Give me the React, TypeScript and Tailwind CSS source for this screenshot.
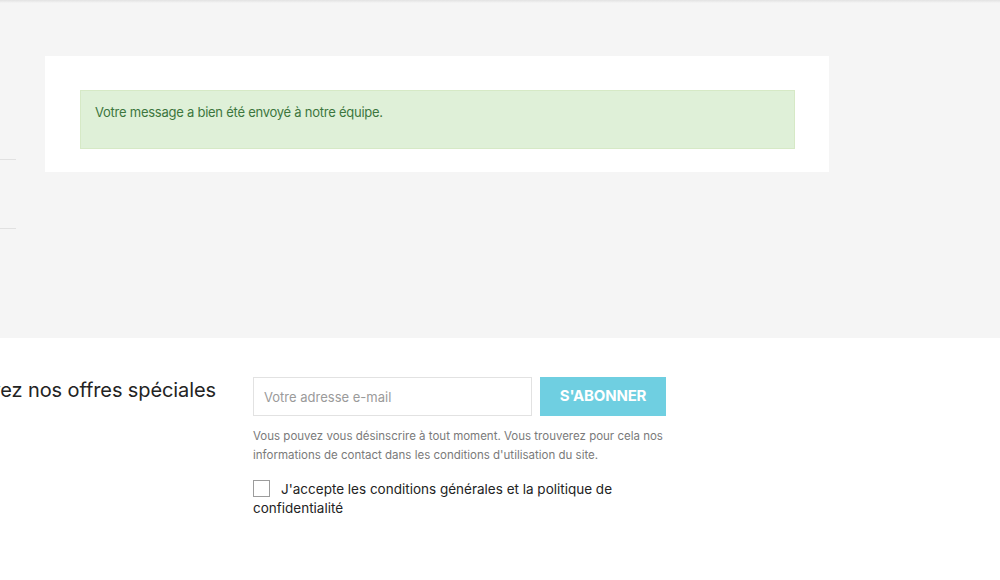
import React from "react";

export default function App() {
  return (
    <div className="w-[1000px] h-[580px] overflow-hidden bg-white" style={{ fontFamily: "Inter, 'Noto Sans', sans-serif" }}>
      <div className="relative h-[338px] bg-[#f5f5f5]">
        <div className="absolute left-0 right-0 top-0 h-[3px] bg-gradient-to-b from-[#e2e2e2] to-[#f5f5f5]" />
        <div className="flex pt-[56px]">
          <div className="w-[16px] shrink-0">
            <div className="mt-[103px] h-px bg-[#e1e1e1]" />
            <div className="mt-[68px] h-px bg-[#e1e1e1]" />
          </div>
          <div className="ml-[29px] w-[784px] h-[116px] bg-white pt-[34px] pl-[35px]">
            <div className="w-[715px] h-[59px] bg-[#dff0d8] border border-[#d6e9c6] pl-[14px] pt-[12px] text-[13px] tracking-[-0.25px] text-[#3c763d]">
              Votre message a bien été envoyé à notre équipe.
            </div>
          </div>
        </div>
      </div>
      <div className="flex pt-[39px]">
        <div className="w-[216px] shrink-0 flex justify-end">
          <h2 className="whitespace-nowrap text-[20px] leading-[26px] text-[#232323] tracking-[-0.1px]">
            Recevez nos offres spéciales
          </h2>
        </div>
        <div className="ml-[37px] w-[420px]">
          <div className="flex gap-[8px]">
            <input
              type="text"
              placeholder="Votre adresse e-mail"
              className="w-[279px] h-[39px] border border-[#e2e2e2] px-[10px] text-[13px] text-[#232323] placeholder:text-[#9a9a9a] outline-none"
            />
            <button className="w-[126px] h-[39px] bg-[#6fcfe1] text-white font-bold text-[15px] tracking-[-0.2px]">
              S'ABONNER
            </button>
          </div>
          <p className="mt-[11px] w-[416px] text-[11.5px] leading-[19px] text-[#7a7a7a]">
            Vous pouvez vous désinscrire à tout moment. Vous trouverez pour cela nos informations de contact dans les conditions d'utilisation du site.
          </p>
          <div className="mt-[15px] w-[414px] text-[13.5px] leading-[19px] text-[#232323]">
            <span className="inline-block w-[17px] h-[17px] border border-[#9c9c9c] align-[-3px] mr-[11px] bg-white" />
            J'accepte les conditions générales et la politique de confidentialité
          </div>
        </div>
      </div>
    </div>
  );
}
